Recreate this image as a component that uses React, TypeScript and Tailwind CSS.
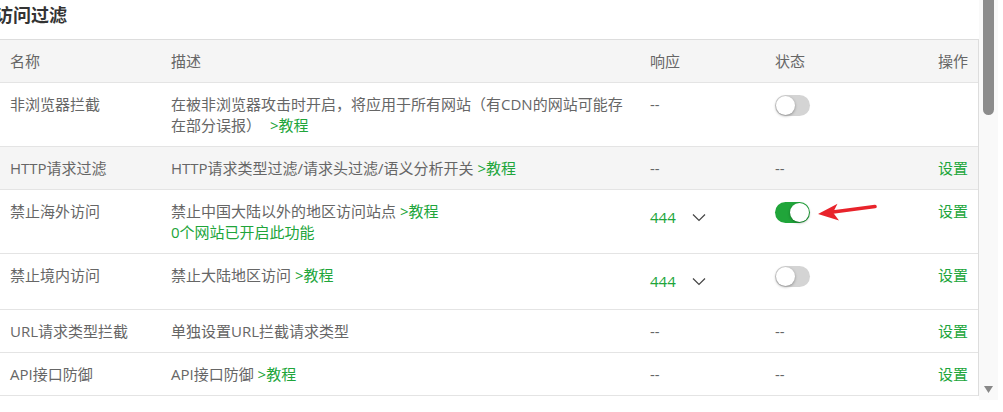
import React from "react";

const GREEN = "text-[#20a53a]";

function Toggle({ on }: { on: boolean }) {
  return (
    <div
      className={`relative mt-[1.5px] h-[21px] w-[35px] rounded-full ${
        on ? "bg-[#20a53a]" : "bg-[#d4d4d4]"
      }`}
    >
      <div
        className={`absolute top-[1px] h-[19px] w-[19px] rounded-full bg-white shadow-[0_1px_3px_rgba(0,0,0,0.35)] ${
          on ? "right-[1px]" : "left-[1px]"
        }`}
      />
    </div>
  );
}

function Select() {
  return (
    <div className={`flex h-[34px] items-center ${GREEN}`}>
      <span>444</span>
      <svg width="14" height="9" viewBox="0 0 14 9" className="ml-[16px]">
        <path d="M1 1.5 L7 7.5 L13 1.5" fill="none" stroke="#444" strokeWidth="1.2" />
      </svg>
    </div>
  );
}

const Link = ({ children }: { children: React.ReactNode }) => (
  <span className={GREEN}>{children}</span>
);

type Row = {
  name: string;
  desc: React.ReactNode;
  resp: React.ReactNode;
  status: React.ReactNode;
  op: boolean;
  bg?: boolean;
};

const rows: Row[] = [
  {
    name: "非浏览器拦截",
    desc: (
      <>
        在被非浏览器攻击时开启，将应用于所有网站（有CDN的网站可能存
        <br />
        在部分误报）<span className="ml-[5px]"></span> <Link>&gt;教程</Link>
      </>
    ),
    resp: "--",
    status: <Toggle on={false} />,
    op: false,
  },
  {
    name: "HTTP请求过滤",
    desc: (
      <>
        HTTP请求类型过滤/请求头过滤/语义分析开关 <Link>&gt;教程</Link>
      </>
    ),
    resp: "--",
    status: "--",
    op: true,
    bg: true,
  },
  {
    name: "禁止海外访问",
    desc: (
      <>
        禁止中国大陆以外的地区访问站点 <Link>&gt;教程</Link>
        <br />
        <Link>0个网站已开启此功能</Link>
      </>
    ),
    resp: <Select />,
    status: <Toggle on={true} />,
    op: true,
  },
  {
    name: "禁止境内访问",
    desc: (
      <>
        禁止大陆地区访问 <Link>&gt;教程</Link>
      </>
    ),
    resp: <Select />,
    status: <Toggle on={false} />,
    op: true,
  },
  {
    name: "URL请求类型拦截",
    desc: "单独设置URL拦截请求类型",
    resp: "--",
    status: "--",
    op: true,
  },
  {
    name: "API接口防御",
    desc: (
      <>
        API接口防御 <Link>&gt;教程</Link>
      </>
    ),
    resp: "--",
    status: "--",
    op: true,
  },
];

const grid = "grid grid-cols-[161px_479px_125px_1fr_80px]";
const cell = "py-[10.5px]";

export default function App() {
  return (
    <div
      className="relative flex h-[412px] w-[1003px] overflow-hidden bg-white text-[15px] leading-[21px] text-[#666]"
      style={{ fontFamily: '"Open Sans", "Noto Sans CJK SC", sans-serif' }}
    >
      <div className="w-[979px] overflow-hidden">
        <div className="-ml-[5px] h-[39px] pt-[3px] text-[18px] font-bold leading-[24px] text-[#333]">
          访问过滤
        </div>
        <div className="w-[979px] border-r border-t border-[#ddd]">
          <div className={`${grid} border-b border-[#e4e4e4] bg-[#f5f5f5]`}>
            <div className={`${cell} pl-[10px]`}>名称</div>
            <div className={`${cell} pl-[10px]`}>描述</div>
            <div className={`${cell} pl-[10px]`}>响应</div>
            <div className={`${cell} pl-[10px]`}>状态</div>
            <div className={`${cell} pr-[10px] text-right`}>操作</div>
          </div>
          {rows.map((r, i) => (
            <div
              key={i}
              className={`${grid} border-b border-[#e4e4e4] ${r.bg ? "bg-[#f5f5f5]" : "bg-white"}`}
            >
              <div className={`${cell} pl-[10px]`}>{r.name}</div>
              <div className={`${cell} whitespace-nowrap pl-[10px]`}>{r.desc}</div>
              <div className={`${cell} pl-[10px]`}>{r.resp}</div>
              <div className={`${cell} pl-[10px]`}>{r.status}</div>
              <div className={`${cell} pr-[10px] text-right`}>
                {r.op && <Link>设置</Link>}
              </div>
            </div>
          ))}
        </div>
      </div>
      <div className="relative h-[400px] w-[19px] bg-[#f9f9f9]">
        <div className="ml-[4px] h-[115px] w-[11px] rounded-b-[6px] bg-[#8c8c8c]" />
        <svg
          width="9"
          height="7"
          viewBox="0 0 9 7"
          className="absolute left-[5px] top-[386px]"
        >
          <path d="M0 0 H9 L4.5 7 Z" fill="#888" />
        </svg>
      </div>
      <svg
        width="1003"
        height="412"
        className="pointer-events-none absolute left-0 top-0"
      >
        <path
          d="M833 212 L875 206.5"
          stroke="#e8232b"
          strokeWidth="3.6"
          strokeLinecap="round"
        />
        <path d="M818 214 L837.5 203.8 L833 212.4 L839 220.5 Z" fill="#e8232b" />
      </svg>
    </div>
  );
}
